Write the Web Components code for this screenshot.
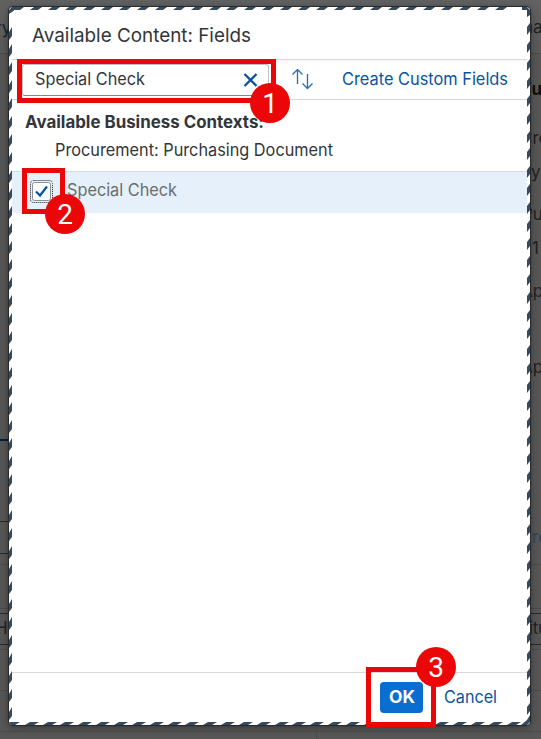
<!DOCTYPE html>
<html lang="en"><head><meta charset="utf-8"><title>Available Content: Fields</title>
<style>html,body{margin:0;width:541px;height:739px;overflow:hidden;background:#575757;font-family:"Inter","Liberation Sans",sans-serif}</style></head><body>
<app-screen></app-screen>
<script>
const define=(name,html,setup)=>customElements.define(name,class extends HTMLElement{
 connectedCallback(){if(this.shadowRoot)return;this.attachShadow({mode:'open'}).innerHTML=html;if(setup)setup(this,this.shadowRoot)}
});
define('fit-text',`<style>:host{display:block;white-space:nowrap;line-height:20px}svg{display:block;overflow:visible}text{fill:currentColor}</style><svg height="20"><text x="0" y="16"></text></svg>`,(h,r)=>{
 const t=r.querySelector('text'),w=h.getAttribute('w');t.textContent=h.getAttribute('label');t.setAttribute('textLength',w);t.setAttribute('lengthAdjust','spacingAndGlyphs');r.querySelector('svg').setAttribute('width',w)});
define('striped-frame',`<style>:host{position:absolute;inset:0;pointer-events:none}svg{display:block}</style>
<svg width="521" height="718"><path class="stripes" fill="#354a5f"/><path d="M0 7V3L3 0H9L3 5Z M513 0H518L521 3V8L518 10V3H513Z M0 715L2 715H11L6 718H2Z M512 718L518 713L521 708V715L518 718Z" fill="#354a5f"/></svg>`,(h,r)=>{
 let d='';
 for(let k=0;k<29;k++){
  const t=Math.round(17.7+17.9*k)-9,b=Math.round(31.7+17.85*k)-9;
  if(t<510)d+=`M${t-6} 3L${t-2} 0H${t+6}L${t+2} 3Z`;
  if(b<506)d+=`M${b-7} 718L${b-2} 715H${b+7}L${b+2} 718Z`;
 }
 for(let k=0;k<39;k++){
  const l=Math.round(33.5+17.9*k)-7,v=Math.round(29.1+17.9*k)-7;
  if(l<708)d+=`M0 ${l-2}L3 ${l-7}V${l+2}L0 ${l+6}Z`;
  if(v<704)d+=`M518 ${v-2}L521 ${v-6}V${v+2}L518 ${v+6}Z`;
 }
 r.querySelector('.stripes').setAttribute('d',d)});
define('search-field',`<style>:host{box-sizing:border-box;display:flex;width:247px;height:32px;border:1px solid #b8bfc5;border-bottom-color:#758ca4;border-radius:3px;padding:4px 9px 0 12px;justify-content:space-between;color:#32363a}svg{margin-top:3px}</style><slot></slot><svg width="17" height="17"><path d="M2.5 2L14.5 14M14.5 2L2.5 14" stroke="#0854a0" stroke-width="2.3" fill="none"/></svg>`);
define('sort-icon',`<style>:host{display:block;width:22px;height:22px}</style><svg width="22" height="22" fill="none" stroke="#2873b3" stroke-width="1.35"><path d="M5.5 15V.5M.5 5.5L5.5 .5L10.5 5.5M15.5 5V19M10.5 14.5L15.5 19.5L20.5 14.5"/></svg>`);
define('check-box',`<style>:host{display:block;width:24px;height:24px}</style><svg width="24" height="24" fill="none"><rect x=".5" y=".5" width="22" height="22" rx="3" stroke="#222" stroke-dasharray="1 1"/><rect x="2.5" y="2.5" width="18" height="18" rx="2" fill="#fff" stroke="#89919a"/><path d="M6 11.5L10 15.5L17 6.5" stroke="#0854a0" stroke-width="2.2"/></svg>`);
define('step-mark',`<style>:host{box-sizing:border-box;position:absolute;border:5px solid #eb0707}svg{position:absolute;overflow:visible}text{font:28px Roboto,sans-serif;fill:#fff;text-anchor:middle}</style><svg width="40" height="40"><circle cx="20" cy="20" r="20" fill="#eb0707"/><text x="20" y="30"></text></svg>`,(h,r)=>{
 const[x,y,w,t,bx,by]=h.getAttribute('box').split(' ').map(Number);h.style.cssText=`left:${x}px;top:${y}px;width:${w}px;height:${t}px`;const s=r.querySelector('svg');s.style.left=bx-x-5+'px';s.style.top=by-y-5+'px';r.querySelector('text').textContent=h.getAttribute('n')});
define('page-backdrop',`<style>:host{position:absolute;inset:0;background:#575757}svg{display:block}text{font:17px Inter,sans-serif;fill:#222}</style><svg width="541" height="739"><defs><linearGradient id="g" x2="0" y2="1"><stop stop-color="#626262"/><stop offset="1" stop-color="#5a5a5a"/></linearGradient></defs><rect width="541" height="53" fill="url(#g)"/><path d="M0 53.5H541M0 564.5H541M0 608.5H541M0 649.5H541M0 690.5H541M0 731.5H541M316.5 732V739" stroke="#4b4b4b"/><path d="M0 521.5H9M0 553.5H9M0 613.5H9M0 644.5H9M530 613.5H541M530 644.5H541" stroke="#292929"/><path d="M0 440H9" stroke="#00203e" stroke-width="2"/><text x="-5" y="34" style="fill:#142334">ry</text><text x="-5" y="634">H</text><text x="523" y="33">na</text><text x="522" y="95" style="font-weight:700;fill:#111">Fu</text><text x="520" y="144">Cre</text><text x="531" y="178">ya</text><text x="522" y="220">Pu</text><text x="532" y="254">1</text><text x="521" y="297">Ap</text><text x="521" y="373">Ap</text><text x="532" y="543" style="fill:#30445a">re</text><text x="529" y="634" textLength="19">itu</text></svg>`);
define('fields-dialog',`<style>
:host{position:absolute;left:9px;top:7px;box-sizing:border-box;width:521px;height:718px;padding:3px;background:#fff;border-radius:4px;display:flex;flex-direction:column;color:#32363a;font-size:17px;box-shadow:0 0 1px 1px #292929,0 2px 10px #0006}
header{height:50px;box-sizing:border-box;padding:16px 0 0 20px;border-bottom:1px solid #d9d9d9;font-size:19px}
.tools{height:40px;box-sizing:border-box;border-bottom:1px solid #d9d9d9;display:flex;padding:4px 0 0 10px;background:linear-gradient(#f7f7f7,#fff 4px)}
sort-icon{margin:5px 0 0 23px}.create{margin:5px 0 0 27.5px;color:#0854a0}
.contexts{height:72px;box-sizing:border-box;border-bottom:1px solid #d5dce0;padding:12px 0 0 12.5px}.contexts b{display:block;height:28px}.sub{margin-left:30px}
.row{height:41px;background:#e5f0fa;display:flex;padding-left:18px;box-sizing:border-box;color:#6a6d70}.row check-box{margin-top:8px}.row fit-text{margin:8px 0 0 13px}
main{flex:1}footer{height:50px;box-sizing:border-box;border-top:1px solid #d9d9d9;display:flex;justify-content:flex-end;padding:9px 30px 0 0;color:#0854a0}
.ok{width:43px;height:31px;box-sizing:border-box;padding:5px 0 0 8.5px;border-radius:4px;background:#0a6ed1;color:#fff;font-weight:700;margin-right:21px}.cancel{margin-top:5px}
</style><header><fit-text label="Available Content: Fields" w="219"></fit-text></header>
<div class="tools"><search-field><fit-text label="Special Check" w="110"></fit-text></search-field><sort-icon></sort-icon><fit-text class="create" label="Create Custom Fields" w="166"></fit-text></div>
<div class="contexts"><b><fit-text label="Available Business Contexts:" w="239"></fit-text></b><fit-text class="sub" label="Procurement: Purchasing Document" w="278"></fit-text></div>
<div class="row"><check-box></check-box><fit-text label="Special Check" w="110"></fit-text></div><main></main>
<footer><div class="ok"><fit-text label="OK" w="26"></fit-text></div><fit-text class="cancel" label="Cancel" w="53"></fit-text></footer><striped-frame></striped-frame>`);
define('app-screen',`<style>:host{display:block;position:relative;width:541px;height:739px;overflow:hidden}</style><page-backdrop></page-backdrop><fields-dialog></fields-dialog><step-mark n="1" box="17 59 259 44 250 83"></step-mark><step-mark n="2" box="22 168 43 46 45 194"></step-mark><step-mark n="3" box="366 667 70 60 416 647"></step-mark>`);
</script></body></html>
